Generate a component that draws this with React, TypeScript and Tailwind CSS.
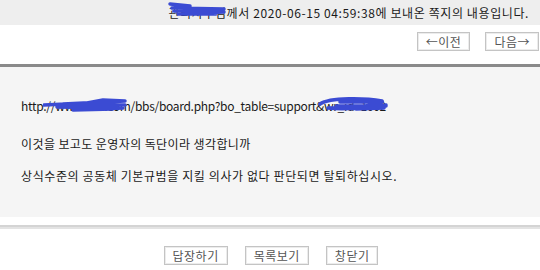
const font = { fontFamily: '"Noto Sans CJK KR", "Liberation Sans", sans-serif' };

function Scribble({ width, d, children }: { width: number; d: string; children: React.ReactNode }) {
  return (
    <span className="relative inline-block">
      {children}
      <svg
        className="absolute left-0 top-[-3px]"
        width={width}
        height={18}
        viewBox={`0 0 ${width} 18`}
        fill="none"
      >
        <path d={d} stroke="#3b4bd3" strokeWidth={3.5} strokeLinecap="round" strokeLinejoin="round" />
      </svg>
    </span>
  );
}

function Btn({ children }: { children: React.ReactNode }) {
  return (
    <button className="h-[19px] px-[8px] bg-white border border-[#c4c4c4] outline outline-1 outline-[#ececec] -outline-offset-2 text-[12px] leading-none text-[#555] tracking-[0.5px]">
      {children}
    </button>
  );
}

export default function App() {
  return (
    <div className="w-[540px] h-[270px] bg-white text-[12px] text-[#1a1a1a] overflow-hidden" style={font}>
      <div className="h-[25px] bg-[#eeeeee] flex items-center justify-end pr-[11px] tracking-[0.6px]">
        <Scribble width={58} d="M2 3 L22 5 L4 7 L56 8 L6 10 L56 11 L10 13 L48 13">
          <span>관리자루</span>
        </Scribble>
        <span>님께서 2020-06-15 04:59:38에 보내온 쪽지의 내용입니다.</span>
      </div>

      <div className="h-[39px] flex justify-end items-start pt-[7px] gap-[15px] pr-[1px]">
        <Btn>←이전</Btn>
        <Btn>다음→</Btn>
      </div>

      <div className="border-t-[3px] border-[#8a8a8a] bg-[#f5f5f5] h-[153px] px-[21px] pt-[32px]">
        <p className="leading-[14px] tracking-[-0.3px]">
          http
          <Scribble width={84} d="M1 9 L44 7 L60 4 L82 5 L20 8 L82 9 L14 11 L80 12 L30 14 L70 13">
            <span>://www.site.com</span>
          </Scribble>
          /bbs/board.php?bo_table=support
          <Scribble width={72} d="M4 8 C14 1 50 2 66 5 C70 8 40 12 12 12 C30 14 60 11 70 9 M24 6 L64 6 M20 10 L70 10 M40 13 L68 12">
            <span>&amp;wr_id=1002</span>
          </Scribble>
        </p>
        <p className="leading-[14px] mt-[24px] tracking-[0.4px]">이것을 보고도 운영자의 독단이라 생각합니까</p>
        <p className="leading-[14px] mt-[18px] tracking-[0.6px]">상식수준의 공동체 기본규범을 지킬 의사가 없다 판단되면 탈퇴하십시오.</p>
      </div>

      <div className="mt-[8px] border-t-2 border-b-2 border-t-[#d4d4d4] border-b-[#e3e3e3]" />

      <div className="flex justify-center gap-[17px] mt-[17px] pl-[2px]">
        <Btn>답장하기</Btn>
        <Btn>목록보기</Btn>
        <Btn>창닫기</Btn>
      </div>
    </div>
  );
}
